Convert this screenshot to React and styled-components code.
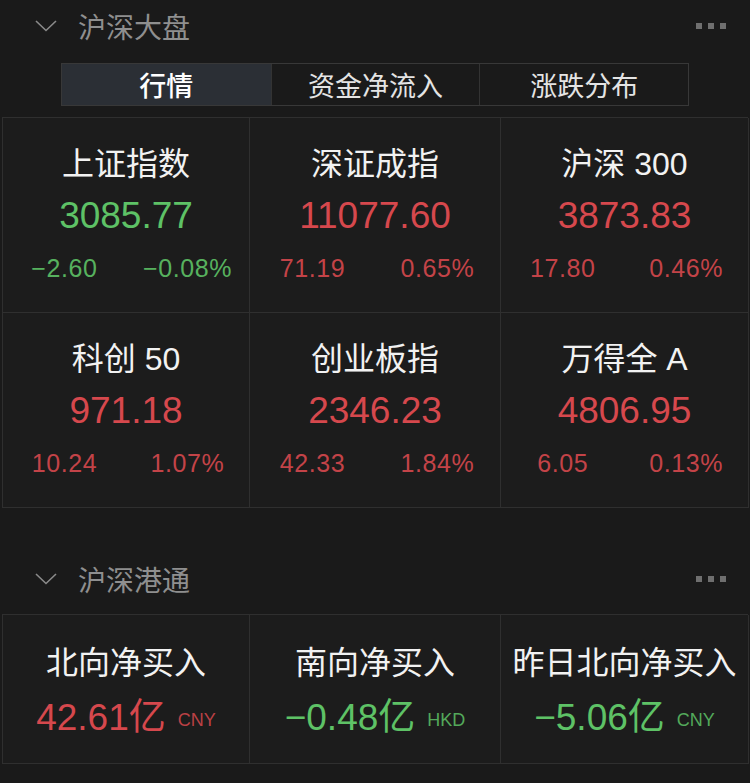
import React from 'react';
import styled, { createGlobalStyle } from 'styled-components';

const GlobalStyle = createGlobalStyle`
  body {
    margin: 0;
    background-color: #1a1a1a;
    font-family: "Liberation Sans", "Noto Sans CJK SC", sans-serif;
  }
`;

const Page = styled.div`
  width: 750px;
  height: 783px;
  background-color: #1a1a1a;
  overflow: hidden;
`;

const SectionHeader = styled.div`
  height: ${(p) => p.$height}px;
  display: flex;
  align-items: ${(p) => (p.$bottom ? 'flex-end' : 'flex-start')};
  padding: ${(p) => (p.$bottom ? 0 : 11)}px 24px ${(p) => (p.$bottom ? 20 : 0)}px 35px;
  box-sizing: border-box;
`;

const HeaderLeft = styled.div`
  display: flex;
  align-items: center;
  flex: 1;
  height: 30px;
`;

const HeaderTitle = styled.span`
  margin-left: 21px;
  font-family: "Noto Sans CJK SC", sans-serif;
  font-size: 28px;
  line-height: 30px;
  color: #8f8f8f;
`;

const Dots = styled.div`
  display: flex;
  gap: 6px;
  height: 30px;
  align-items: center;
`;

const Dot = styled.span`
  width: 6px;
  height: 6px;
  background-color: #6f6f6f;
`;

const Tabs = styled.div`
  margin: 0 61px;
  height: 43px;
  display: grid;
  grid-template-columns: repeat(3, 1fr);
  border: 1px solid #383838;
  box-sizing: border-box;
`;

const Tab = styled.div`
  display: flex;
  align-items: center;
  justify-content: center;
  font-family: "Noto Sans CJK SC", sans-serif;
  font-size: 27px;
  color: ${(p) => (p.$active ? '#ffffff' : '#e4e4e4')};
  font-weight: ${(p) => (p.$active ? 500 : 400)};
  background-color: ${(p) => (p.$active ? '#2b2f35' : 'transparent')};
  border-left: ${(p) => (p.$first ? 'none' : '1px solid #333')};
`;

const Grid = styled.div`
  margin: ${(p) => p.$top}px 2px 0 2px;
  display: grid;
  grid-template-columns: 247px 251px 248px;
  grid-auto-rows: ${(p) => p.$row}px;
  border-top: 1px solid #2f2f2f;
  border-left: 1px solid #2f2f2f;
  background-color: #1c1c1c;
`;

const Cell = styled.div`
  display: flex;
  flex-direction: column;
  align-items: stretch;
  padding-top: ${(p) => p.$pad}px;
  border-right: 1px solid #2f2f2f;
  border-bottom: 1px solid #2f2f2f;
  box-sizing: border-box;
`;

const CellTitle = styled.div`
  height: 52px;
  display: flex;
  align-items: center;
  justify-content: center;
  font-size: 32px;
  color: #f2f2f2;
  white-space: nowrap;
`;

const Value = styled.div`
  height: ${(p) => p.$h}px;
  margin-top: ${(p) => p.$gap || 0}px;
  display: flex;
  align-items: center;
  justify-content: center;
  font-size: 37px;
  color: ${(p) => p.$color};
  white-space: nowrap;
`;

const Unit = styled.span`
  font-size: 18px;
  margin-left: 12px;
  margin-top: 12px;
  opacity: 0.85;
`;

const SubRow = styled.div`
  height: 50px;
  display: grid;
  grid-template-columns: 1fr 1fr;
  align-items: center;
  justify-items: center;
  font-size: 25px;
  letter-spacing: 0.6px;
  color: ${(p) => p.$color};
  opacity: 0.9;
`;

const GREEN = '#5ec266';
const RED = '#d6484d';

const indices = [
  { name: '上证指数', value: '3085.77', chg: '−2.60', pct: '−0.08%', up: false },
  { name: '深证成指', value: '11077.60', chg: '71.19', pct: '0.65%', up: true },
  { name: '沪深 300', value: '3873.83', chg: '17.80', pct: '0.46%', up: true },
  { name: '科创 50', value: '971.18', chg: '10.24', pct: '1.07%', up: true },
  { name: '创业板指', value: '2346.23', chg: '42.33', pct: '1.84%', up: true },
  { name: '万得全 A', value: '4806.95', chg: '6.05', pct: '0.13%', up: true },
];

const flows = [
  { name: '北向净买入', value: '42.61亿', unit: 'CNY', up: true },
  { name: '南向净买入', value: '−0.48亿', unit: 'HKD', up: false },
  { name: '昨日北向净买入', value: '−5.06亿', unit: 'CNY', up: false },
];

function Chevron() {
  return (
    <svg width="22" height="12" viewBox="0 0 22 12">
      <polyline points="1,1 11,10.5 21,1" fill="none" stroke="#8a8a8a" strokeWidth="1.6" />
    </svg>
  );
}

function Header({ title, height, bottom }) {
  return (
    <SectionHeader $height={height} $bottom={bottom}>
      <HeaderLeft>
        <Chevron />
        <HeaderTitle>{title}</HeaderTitle>
      </HeaderLeft>
      <Dots>
        <Dot />
        <Dot />
        <Dot />
      </Dots>
    </SectionHeader>
  );
}

export default function App() {
  return (
    <Page>
      <GlobalStyle />
      <Header title="沪深大盘" height={63} />
      <Tabs>
        <Tab $active $first>行情</Tab>
        <Tab>资金净流入</Tab>
        <Tab>涨跌分布</Tab>
      </Tabs>
      <Grid $top={11} $row={195}>
        {indices.map((it) => (
          <Cell key={it.name} $pad={17}>
            <CellTitle>{it.name}</CellTitle>
            <Value $color={it.up ? RED : GREEN} $h={54} $gap={2}>{it.value}</Value>
            <SubRow $color={it.up ? RED : GREEN}>
              <span>{it.chg}</span>
              <span>{it.pct}</span>
            </SubRow>
          </Cell>
        ))}
      </Grid>
      <Header title="沪深港通" height={106} bottom />
      <Grid $top={0} $row={149}>
        {flows.map((it) => (
          <Cell key={it.name} $pad={19}>
            <CellTitle>{it.name}</CellTitle>
            <Value $color={it.up ? RED : GREEN} $h={56}>
              {it.value}
              <Unit>{it.unit}</Unit>
            </Value>
          </Cell>
        ))}
      </Grid>
    </Page>
  );
}
